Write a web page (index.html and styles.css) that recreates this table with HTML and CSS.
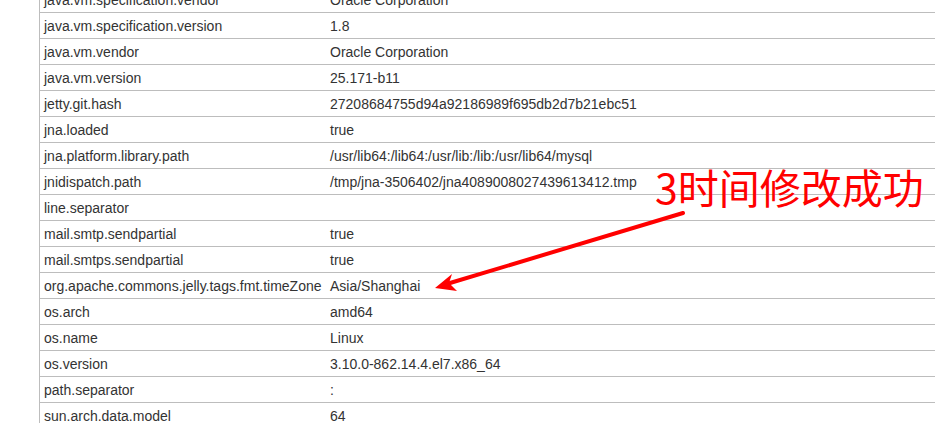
FILE: index.html
```html
<!DOCTYPE html>
<html>
<head>
<meta charset="utf-8">
<link rel="stylesheet" href="styles.css">
</head>
<body>
<div class="page">
  <table class="props">
    <tbody>
      <tr><td class="k">java.vm.specification.vendor</td><td class="v">Oracle Corporation</td></tr>
      <tr><td class="k">java.vm.specification.version</td><td class="v">1.8</td></tr>
      <tr><td class="k">java.vm.vendor</td><td class="v">Oracle Corporation</td></tr>
      <tr><td class="k">java.vm.version</td><td class="v">25.171-b11</td></tr>
      <tr><td class="k">jetty.git.hash</td><td class="v">27208684755d94a92186989f695db2d7b21ebc51</td></tr>
      <tr><td class="k">jna.loaded</td><td class="v">true</td></tr>
      <tr><td class="k">jna.platform.library.path</td><td class="v">/usr/lib64:/lib64:/usr/lib:/lib:/usr/lib64/mysql</td></tr>
      <tr><td class="k">jnidispatch.path</td><td class="v">/tmp/jna-3506402/jna4089008027439613412.tmp</td></tr>
      <tr><td class="k">line.separator</td><td class="v"></td></tr>
      <tr><td class="k">mail.smtp.sendpartial</td><td class="v">true</td></tr>
      <tr><td class="k">mail.smtps.sendpartial</td><td class="v">true</td></tr>
      <tr><td class="k">org.apache.commons.jelly.tags.fmt.timeZone</td><td class="v">Asia/Shanghai</td></tr>
      <tr><td class="k">os.arch</td><td class="v">amd64</td></tr>
      <tr><td class="k">os.name</td><td class="v">Linux</td></tr>
      <tr><td class="k">os.version</td><td class="v">3.10.0-862.14.4.el7.x86_64</td></tr>
      <tr><td class="k">path.separator</td><td class="v">:</td></tr>
      <tr><td class="k">sun.arch.data.model</td><td class="v">64</td></tr>
    </tbody>
  </table>
  <div class="note">3时间修改成功</div>
  <svg class="arrow" width="935" height="423" viewBox="0 0 935 423">
    <line x1="683" y1="213" x2="450" y2="283" stroke="#ff0000" stroke-width="4" stroke-linecap="round"/>
    <polygon points="435,288 452,274 449,283 457,291" fill="#ff0000"/>
  </svg>
</div>
</body>
</html>
```
FILE: styles.css
```css
html, body {
  margin: 0;
  padding: 0;
  background: #ffffff;
  overflow: hidden;
}
.page {
  position: relative;
  width: 935px;
  height: 423px;
  overflow: hidden;
}
.props {
  margin-top: -13px;
  margin-left: 39px;
  width: 900px;
  border-collapse: collapse;
  border-left: 1px solid #bdbdbd;
  font-family: "Liberation Sans", Arial, sans-serif;
  font-size: 14px;
  color: #333333;
}
.props td {
  height: 25px;
  padding: 0 4px;
  border-bottom: 1px solid #bdbdbd;
  vertical-align: middle;
  white-space: nowrap;
}
.props td.k {
  width: 278px;
}
.note {
  position: absolute;
  left: 655px;
  top: 158px;
  font-family: "Noto Sans CJK SC", sans-serif;
  font-size: 41px;
  line-height: 56px;
  color: #ff0000;
  white-space: nowrap;
}
.arrow {
  position: absolute;
  left: 0;
  top: 0;
}
```
